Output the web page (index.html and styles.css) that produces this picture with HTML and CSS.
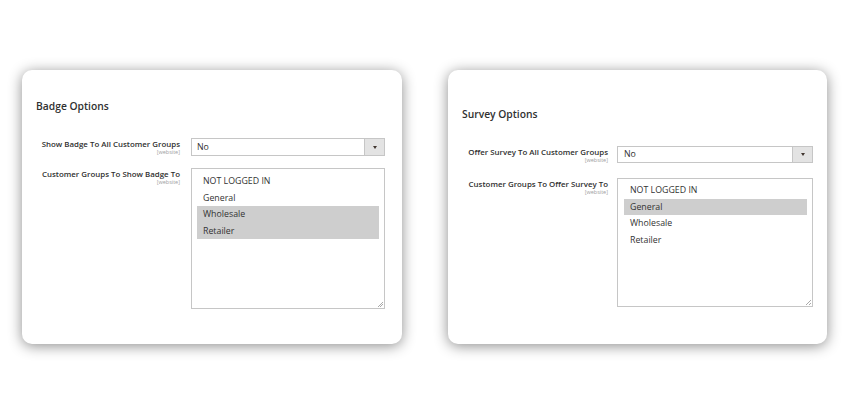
FILE: index.html
```html
<!DOCTYPE html>
<html>
<head>
<meta charset="utf-8">
<link rel="stylesheet" href="styles.css">
</head>
<body>
<div class="page">
  <section class="card card-badge">
    <h2 class="card-title">Badge Options</h2>
    <div class="form">
      <div class="field-label">
        <span class="label-text">Show Badge To All Customer Groups</span>
        <span class="scope">[website]</span>
      </div>
      <div class="select">
        <span class="select-value">No</span>
        <span class="select-btn"><span class="caret"></span></span>
      </div>
      <div class="field-label">
        <span class="label-text">Customer Groups To Show Badge To</span>
        <span class="scope">[website]</span>
      </div>
      <div class="multi multi-tall">
        <div class="opt">NOT LOGGED IN</div>
        <div class="opt">General</div>
        <div class="opt sel">Wholesale</div>
        <div class="opt sel">Retailer</div>
        <span class="grip"></span>
      </div>
    </div>
  </section>
  <section class="card card-survey">
    <h2 class="card-title">Survey Options</h2>
    <div class="form">
      <div class="field-label">
        <span class="label-text">Offer Survey To All Customer Groups</span>
        <span class="scope">[website]</span>
      </div>
      <div class="select">
        <span class="select-value">No</span>
        <span class="select-btn"><span class="caret"></span></span>
      </div>
      <div class="field-label">
        <span class="label-text">Customer Groups To Offer Survey To</span>
        <span class="scope">[website]</span>
      </div>
      <div class="multi multi-short">
        <div class="opt">NOT LOGGED IN</div>
        <div class="opt sel">General</div>
        <div class="opt">Wholesale</div>
        <div class="opt">Retailer</div>
        <span class="grip"></span>
      </div>
    </div>
  </section>
</div>
</body>
</html>
```

FILE: styles.css
```css
html, body {
  margin: 0;
  padding: 0;
  background: #ffffff;
}
body {
  font-family: "Open Sans", "Liberation Sans", sans-serif;
  color: #303030;
  min-height: 420px;
}
.page {
  display: flex;
  gap: 46px;
  padding: 70px 0 76px 22px;
}
.card {
  box-sizing: border-box;
  width: 380px;
  height: 274px;
  background: #fff;
  border-radius: 10px;
  box-shadow: 0 2px 14px rgba(0, 0, 0, 0.45);
  padding: 29px 17px 0 14px;
}
.card-survey {
  width: 379px;
  padding: 37px 14px 0 14px;
}
.card-title {
  margin: 0;
  font-size: 10.3px;
  line-height: 14px;
  font-weight: 600;
  color: #303030;
}
.form {
  display: grid;
  grid-template-columns: 144px 1fr;
  column-gap: 11px;
  row-gap: 12px;
  margin-top: 25px;
}
.card-survey .form {
  margin-top: 25px;
  grid-template-columns: 146px 1fr;
  column-gap: 9px;
  row-gap: 14px;
}
.field-label {
  display: flex;
  flex-direction: column;
  align-items: flex-end;
  text-align: right;
  padding-top: 1px;
}
.label-text {
  font-size: 7.9px;
  line-height: 10px;
  font-weight: 600;
  color: #303030;
  white-space: nowrap;
}
.scope {
  font-size: 5.5px;
  line-height: 7px;
  color: #a0a0a0;
}
.select {
  display: flex;
  height: 18px;
  box-sizing: border-box;
  border: 1px solid #c6c6c6;
  background: #fff;
}
.card-survey .select {
  height: 17px;
}
.select-value {
  flex: 1;
  font-size: 8.8px;
  line-height: 16px;
  padding-left: 5px;
  color: #303030;
}
.card-survey .select-value {
  line-height: 15px;
  padding-left: 6px;
}
.select-btn {
  width: 19px;
  background: #e3e3e3;
  border-left: 1px solid #c6c6c6;
  display: flex;
  align-items: center;
  justify-content: center;
}
.caret {
  width: 0;
  height: 0;
  border-left: 2.5px solid transparent;
  border-right: 2.5px solid transparent;
  border-top: 3px solid #41362f;
}
.multi {
  position: relative;
  box-sizing: border-box;
  border: 1px solid #c6c6c6;
  padding: 4px 5px 0 5px;
}
.multi-tall {
  height: 141px;
}
.multi-short {
  height: 129px;
  padding-top: 3px;
  padding-left: 6px;
}
.opt {
  font-size: 8.8px;
  line-height: 16.5px;
  padding-left: 6px;
  color: #333333;
}
.opt.sel {
  background: #cecece;
}
.grip {
  position: absolute;
  right: 1px;
  bottom: 1px;
  width: 5px;
  height: 5px;
  background: linear-gradient(135deg, transparent 0 45%, #aaa 45% 55%, transparent 55% 70%, #aaa 70% 80%, transparent 80%);
}
```
